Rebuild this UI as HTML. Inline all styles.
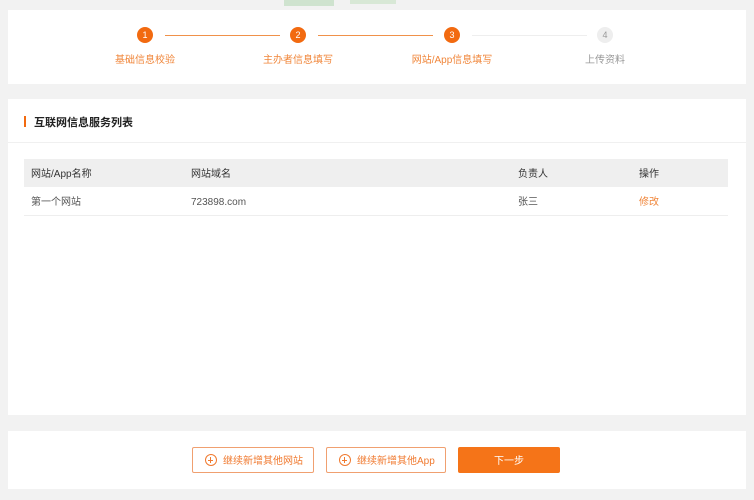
<!DOCTYPE html>
<html><head><meta charset="utf-8"><style>
*{margin:0;padding:0;box-sizing:border-box}
body{width:754px;height:500px;background:#f2f2f2;font-family:"Liberation Sans","Noto Sans CJK SC",sans-serif;position:relative;overflow:hidden;font-size:10px;color:#333}
.card{position:absolute;left:8px;width:738px;background:#fff}
.c{position:absolute;width:16px;height:16px;border-radius:50%;background:#f26a10;color:#fff;text-align:center;line-height:16px;font-size:9px;top:27px}
.l{position:absolute;height:1px;top:35px;background:#f0914a}
.t{position:absolute;top:54px;line-height:14px;color:#f0863a;font-size:10px;width:120px;text-align:center}
.a{position:absolute;font-size:10px;line-height:14px;height:14px}
.btn{position:absolute;top:447px;height:26px;border:1px solid #f0a070;color:#f07a30;font-size:10px;line-height:27px;border-radius:2px}
.pl{display:inline-block;width:12px;height:12px;border:1.3px solid #f07a30;border-radius:50%;position:relative;vertical-align:middle;margin:0 6px 2px 12px}
.pl:before{content:"";position:absolute;left:2px;top:4.2px;width:5.4px;height:1.2px;background:#f07a30}
.pl:after{content:"";position:absolute;left:4.2px;top:2px;width:1.2px;height:5.4px;background:#f07a30}
</style></head><body>
<div style="position:absolute;left:284px;top:0;width:50px;height:6px;background:#cfe3cf"></div>
<div style="position:absolute;left:350px;top:0;width:46px;height:4px;background:#d8e8d6"></div>
<div class="card" style="top:10px;height:74px"></div>
<div class="c" style="left:137px">1</div>
<div class="l" style="left:165px;width:115px"></div>
<div class="c" style="left:290px">2</div>
<div class="l" style="left:318px;width:115px"></div>
<div class="c" style="left:444px">3</div>
<div class="l" style="left:472px;width:115px;background:#eee"></div>
<div class="c" style="left:597px;background:#eee;color:#999">4</div>
<div class="t" style="left:85px">基础信息校验</div>
<div class="t" style="left:238px">主办者信息填写</div>
<div class="t" style="left:392px">网站/App信息填写</div>
<div class="t" style="left:545px;color:#999">上传资料</div>

<div class="card" style="top:99px;height:316px"></div>
<div style="position:absolute;left:24px;top:116px;width:2px;height:11px;background:#f26a10"></div>
<div class="a" style="left:34px;top:116px;font-size:11px;line-height:14px;color:#222;font-weight:bold">互联网信息服务列表</div>
<div style="position:absolute;left:8px;top:142px;width:738px;height:1px;background:#f0f0f0"></div>
<div style="position:absolute;left:24px;top:159px;width:704px;height:28px;background:#efefef"></div>
<div style="position:absolute;left:24px;top:215px;width:704px;height:1px;background:#eee"></div>
<div class="a" style="left:31px;top:168px">网站/App名称</div>
<div class="a" style="left:191px;top:168px">网站域名</div>
<div class="a" style="left:518px;top:168px">负责人</div>
<div class="a" style="left:639px;top:168px">操作</div>
<div class="a" style="left:31px;top:196px;color:#555">第一个网站</div>
<div class="a" style="left:191px;top:196px;color:#555"><span>723898.com</span><span style="visibility:hidden">网</span></div>
<div class="a" style="left:518px;top:196px;color:#555">张三</div>
<div class="a" style="left:639px;top:196px;color:#f0863a">修改</div>

<div class="card" style="top:431px;height:58px"></div>
<div class="btn" style="left:192px;width:122px"><span class="pl"></span>继续新增其他网站</div>
<div class="btn" style="left:326px;width:120px"><span class="pl"></span>继续新增其他App</div>
<div class="btn" style="left:458px;width:102px;background:#f57418;border-color:#f57418;color:#fff;text-align:center">下一步</div>
</body></html>
